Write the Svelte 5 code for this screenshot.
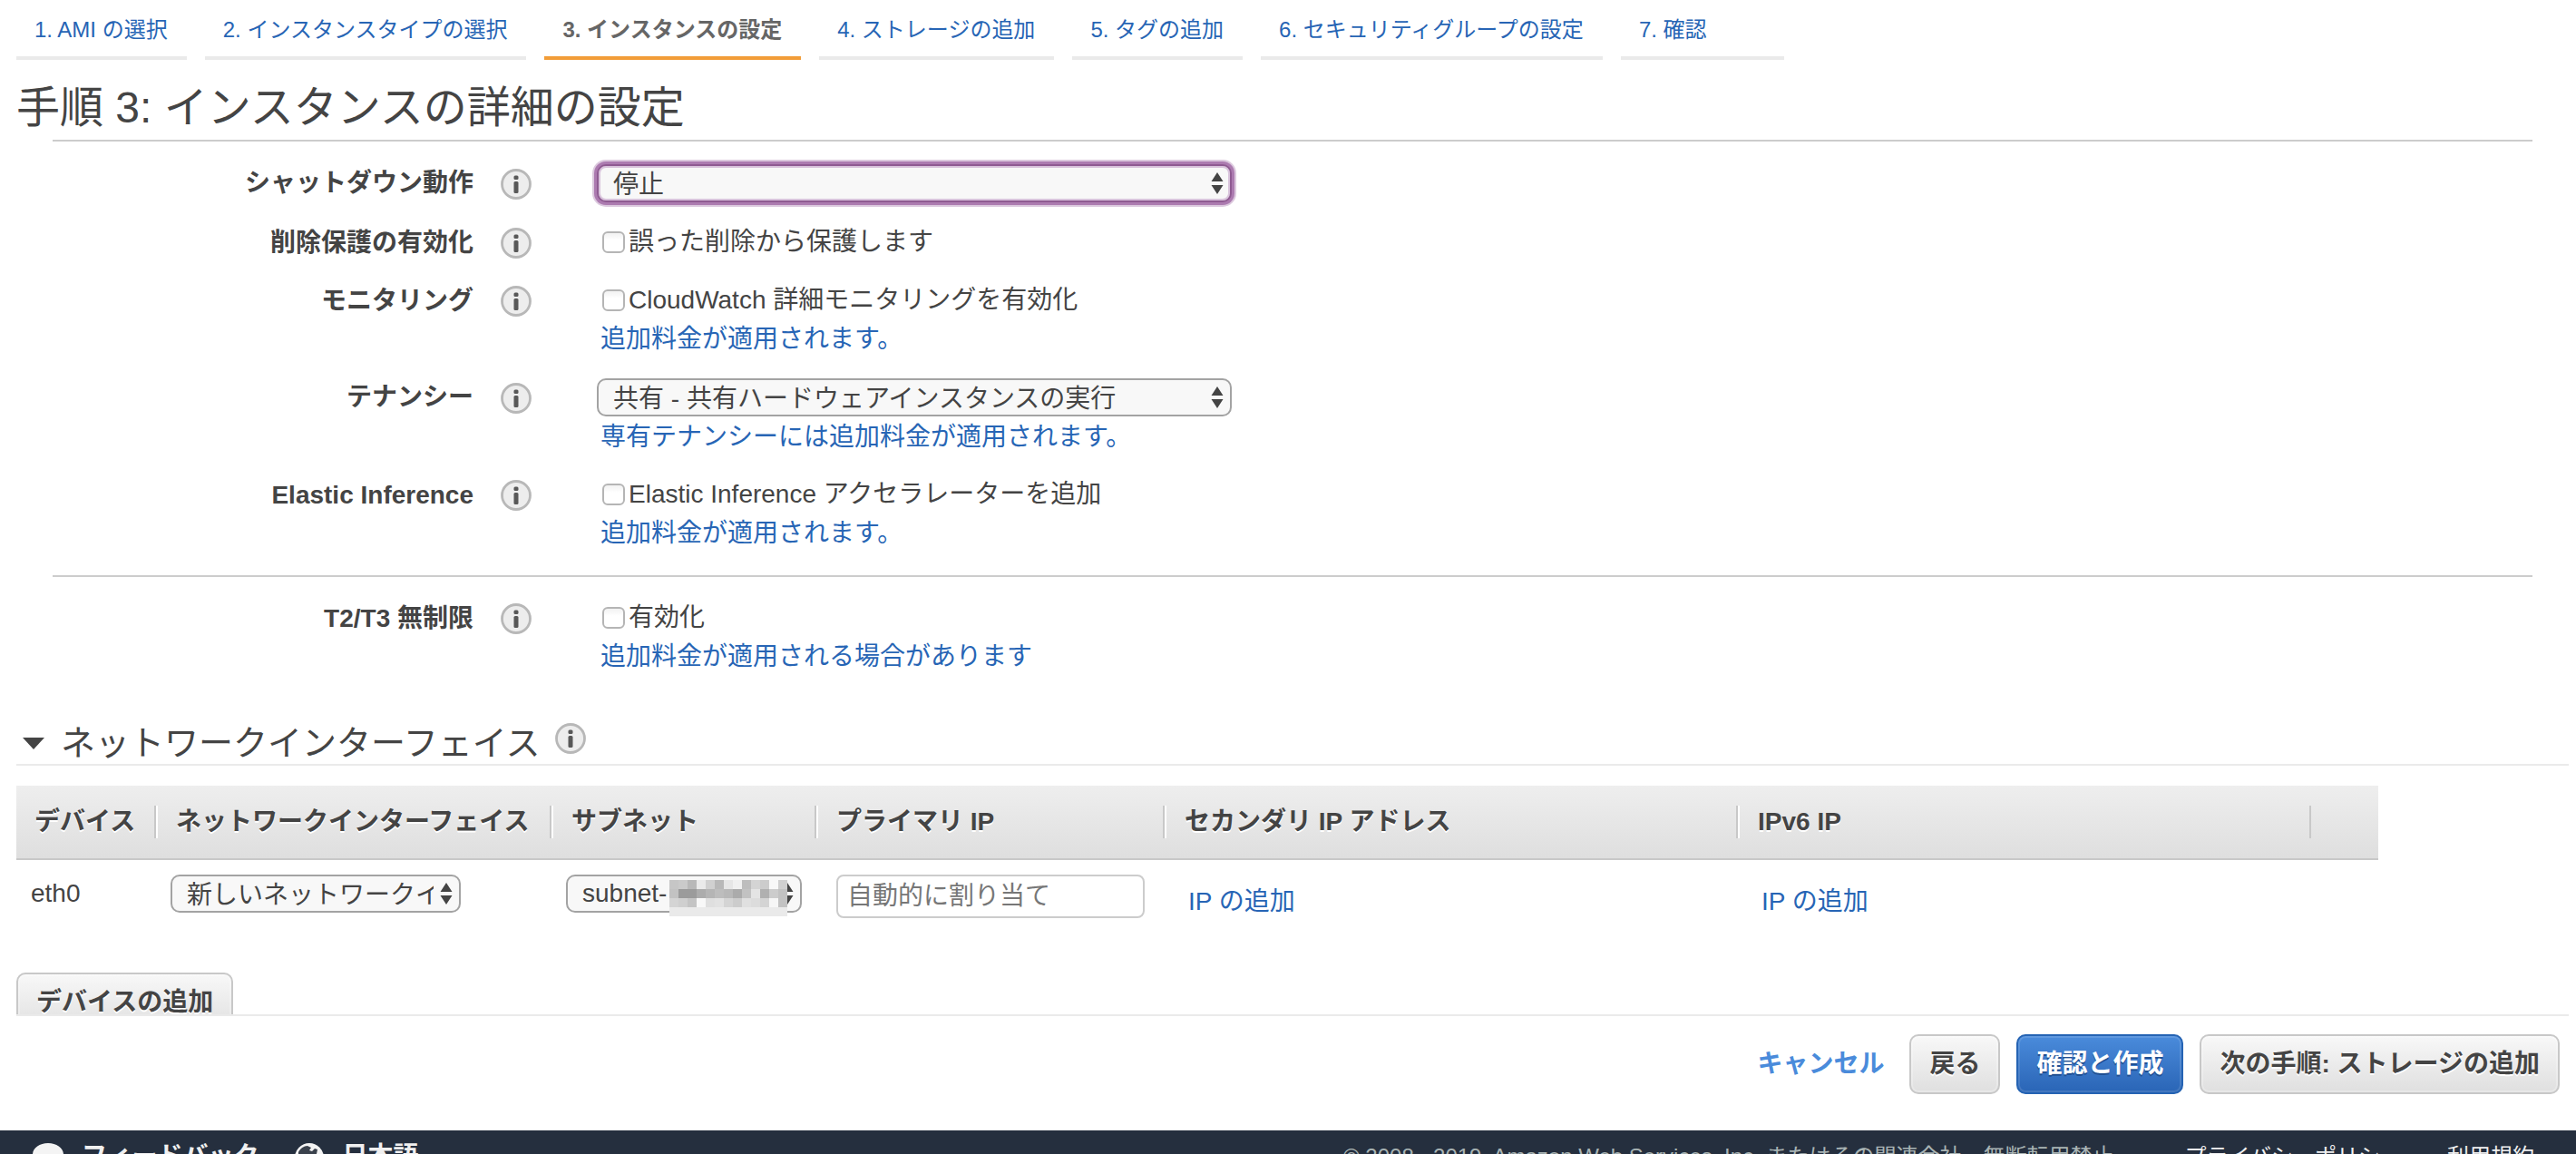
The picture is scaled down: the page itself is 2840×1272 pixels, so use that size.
<script>
  const steps = [
    '1. AMI の選択',
    '2. インスタンスタイプの選択',
    '3. インスタンスの設定',
    '4. ストレージの追加',
    '5. タグの追加',
    '6. セキュリティグループの設定',
    '7. 確認'
  ];
  const current = 2;

  const mainFields = [
    { id: 'shutdown', label: 'シャットダウン動作', select: '停止', focused: true },
    { id: 'protect', label: '削除保護の有効化', check: '誤った削除から保護します' },
    { id: 'monitor', label: 'モニタリング', check: 'CloudWatch 詳細モニタリングを有効化', hint: '追加料金が適用されます。' },
    { id: 'tenancy', label: 'テナンシー', select: '共有 - 共有ハードウェアインスタンスの実行', hint: '専有テナンシーには追加料金が適用されます。' },
    { id: 'elastic', label: 'Elastic Inference', check: 'Elastic Inference アクセラレーターを追加', hint: '追加料金が適用されます。' }
  ];
  const burstFields = [
    { id: 'unlimited', label: 'T2/T3 無制限', check: '有効化', hint: '追加料金が適用される場合があります' }
  ];

  const columns = ['デバイス', 'ネットワークインターフェイス', 'サブネット', 'プライマリ IP', 'セカンダリ IP アドレス', 'IPv6 IP'];

  // Grey levels of the mask over the subnet id, one row per line
  const mask = [
    'c6 ca b8 ea d0 b8 e6 f0 bd d4 cc f8 cf',
    'c2 9b 9b ac b5 bd b8 ab c2 e4 b0 cc c2',
    'd4 cf c4 f8 df e2 d4 cc e0 dc d4 f6 c2',
    'ea ea ea ea ea ea ea ea ea ea ea ea ea'
  ].map((line) => line.split(' '));
</script>

{#snippet info(name)}
  <button class="info" type="button" aria-label={`${name} の情報`}>
    <svg viewBox="0 0 34 34" width="34" height="34" aria-hidden="true">
      <circle cx="17" cy="17" r="15.500" fill="#ededed" stroke="#b8b8b8" stroke-width="2.800" />
      <rect x="14.500" y="7.500" width="5" height="4.500" rx="1.500" fill="#585858" />
      <rect x="14.500" y="14" width="5" height="13" rx="1.500" fill="#585858" />
    </svg>
  </button>
{/snippet}

{#snippet arrows()}
  <svg class="arrows" viewBox="0 0 14 24" width="14" height="24" aria-hidden="true">
    <path d="M7 0 13.5 10H.5zM7 24 .5 14h13z" fill="#444" />
  </svg>
{/snippet}

{#snippet field(f)}
  <div class="field">
    <label class="name" class:tall={f.select} for={f.id}>{f.label}</label>
    <div class="tip" class:tall={f.select}>{@render info(f.label)}</div>
    <div class="control">
      {#if f.select}
        <div class="line tall">
          <span class="picker wide">
            <select id={f.id} class:focused={f.focused}><option>{f.select}</option></select>
            {@render arrows()}
          </span>
        </div>
      {:else}
        <div class="line">
          <input id={f.id} type="checkbox" />
          <label for={f.id}>{f.check}</label>
        </div>
      {/if}
      {#if f.hint}<a class="hint" href="#pricing">{f.hint}</a>{/if}
    </div>
  </div>
{/snippet}

<div class="shell">
  <main>
    <nav class="steps">
      {#each steps as step, i}
        <a href={`#step-${i + 1}`} class:active={i === current} aria-current={i === current ? 'step' : undefined}>{step}</a>
      {/each}
    </nav>
    <h1>手順 3: インスタンスの詳細の設定</h1>

    <form class="group">
      {#each mainFields as f}{@render field(f)}{/each}
    </form>
    <form class="group second">
      {#each burstFields as f}{@render field(f)}{/each}
    </form>

    <section>
      <header>
        <h2>
          <button class="toggle" type="button" aria-expanded="true">
            <svg viewBox="0 0 24 13" width="24" height="13" aria-hidden="true"><path d="M0 0h24L12 13z" fill="#444" /></svg>
            ネットワークインターフェイス
          </button>
        </h2>
        {@render info('ネットワークインターフェイス')}
      </header>
      <table>
        <colgroup>
          <col class="c-device" /><col class="c-nic" /><col class="c-subnet" /><col class="c-ip" />
          <col class="c-long" /><col class="c-long" /><col class="c-end" />
        </colgroup>
        <thead>
          <tr>
            {#each columns as c}<th scope="col"><div>{c}</div></th>{/each}
            <td class="end"></td>
          </tr>
        </thead>
        <tbody>
          <tr>
            <td class="device">eth0</td>
            <td class="pick">
              <span class="picker nic">
                <select aria-label="ネットワークインターフェイス"><option>新しいネットワークインターフェイス</option></select>
                {@render arrows()}
              </span>
            </td>
            <td class="pick">
              <span class="picker subnet">
                <select class="latin" aria-label="サブネット"><option>subnet-</option></select>
                {@render arrows()}
                <svg class="mask" viewBox="0 0 130 40" width="130" height="40" shape-rendering="crispEdges" aria-hidden="true">
                  {#each mask as row, y}
                    {#each row as g, x}
                      <rect x={x * 10} y={y * 10} width="10" height="10" fill={`#${g}${g}${g}`} />
                    {/each}
                  {/each}
                </svg>
              </span>
            </td>
            <td class="ip"><input type="text" aria-label="プライマリ IP" placeholder="自動的に割り当て" /></td>
            <td class="add"><a href="#secondary-ip">IP の追加</a></td>
            <td class="add"><a href="#ipv6-ip">IP の追加</a></td>
            <td></td>
          </tr>
        </tbody>
      </table>
      <button class="btn" type="button">デバイスの追加</button>
    </section>
  </main>

  <div class="actions">
    <a href="#cancel">キャンセル</a>
    <button class="btn" type="button">戻る</button>
    <button class="btn primary" type="button">確認と作成</button>
    <button class="btn" type="button">次の手順: ストレージの追加</button>
  </div>

  <footer>
    <button type="button">
      <svg viewBox="0 0 34 30" width="34" height="30" aria-hidden="true">
        <path d="M17 0C7.600 0 0 5.600 0 12.500c0 4.200 2.800 7.900 7 10.200L5 30l9-5.200c1 .1 2 .2 3 .2 9.400 0 17-5.600 17-12.500S26.400 0 17 0z" fill="#f4f4f4" />
      </svg>
      フィードバック
    </button>
    <button type="button">
      <svg viewBox="0 0 32 32" width="32" height="32" aria-hidden="true">
        <circle cx="16" cy="16" r="16" fill="#f4f4f4" />
        <path d="M4 10C6 6 10 3 14 3l4 2-2 3 3 1 3-3 3 1-1 5-4 1-2 4-5 1-3-3-6 1z" fill="#3a414c" />
        <path d="M16 19l7 1 3 3-5 6-4-3z" fill="#3a414c" />
      </svg>
      日本語
    </button>
    <small>© 2008 - 2019, Amazon Web Services, Inc. またはその関連会社。無断転用禁止。</small>
    <a class="privacy" href="#privacy">プライバシーポリシー</a>
    <a href="#terms">利用規約</a>
  </footer>
</div>

<style>
  :global(body) {
    margin: 0;
    background: #fff;
  }
  .shell {
    display: flex;
    flex-direction: column;
    height: 100vh;
    overflow: hidden;
    color: #444;
    font: 28px/42px 'Liberation Sans', 'Noto Sans CJK JP', sans-serif;
  }
  .shell * {
    box-sizing: border-box;
  }
  button,
  input,
  select {
    margin: 0;
    font: inherit;
    color: inherit;
  }
  button {
    padding: 0;
    border: 0;
    background: none;
    cursor: pointer;
  }
  svg {
    display: block;
    flex: none;
  }
  a {
    color: #2765b5;
    text-decoration: none;
  }
  main {
    flex: 1 1 0;
    min-height: 0;
    overflow: hidden;
    padding: 0 8px 0 18px;
  }

  .steps {
    display: flex;
    gap: 20px;
    font-size: 24px;
  }
  .steps a {
    min-width: 180px;
    height: 66px;
    padding: 10px 21px 0 20px;
    border-bottom: 4px solid #eaeaea;
    line-height: 46px;
    white-space: nowrap;
  }
  .steps a.active {
    border-color: #f29d38;
    color: #666;
    font-weight: bold;
  }
  h1 {
    margin: 0;
    padding-top: 18px;
    font-size: 48px;
    font-weight: normal;
    line-height: 70px;
  }

  .group {
    display: flex;
    flex-direction: column;
    gap: 22px;
    margin: 0 40px;
    padding: 24px 0 26px;
    border-top: 2px solid #ccc;
  }
  .group.second {
    padding-bottom: 0;
  }
  .field {
    display: grid;
    grid-template-columns: 464px 136px 1fr;
  }
  .name {
    height: 42px;
    font-weight: bold;
    line-height: 44px;
    text-align: right;
  }
  .tip {
    display: flex;
    align-items: center;
    height: 42px;
    padding: 2px 0 0 30px;
  }
  .info {
    width: 34px;
    height: 34px;
    border-radius: 50%;
  }
  .line {
    display: flex;
    align-items: center;
    gap: 4px;
    height: 42px;
    padding-left: 6px;
  }
  .tall {
    height: 44px;
  }
  .line.tall {
    padding-left: 0;
  }
  .hint {
    display: block;
    padding-left: 4px;
    line-height: 44px;
    height: 42px;
  }
  input[type='checkbox'] {
    appearance: none;
    width: 25px;
    height: 24px;
    border: 2px solid #b5b5b5;
    border-radius: 6px;
    background: linear-gradient(#f2f2f2, #fff 40%);
  }

  .picker {
    position: relative;
    display: block;
  }
  .wide {
    width: 700px;
  }
  .nic {
    width: 320px;
  }
  .subnet {
    width: 260px;
  }
  select {
    appearance: none;
    display: block;
    width: 100%;
    height: 42px;
    padding: 4px 28px 0 16px;
    border: 2px solid #a3a3a3;
    border-radius: 10px;
    background: #f8f8f8;
    line-height: 34px;
    outline: none;
  }
  select.latin {
    padding-top: 0;
  }
  select.focused {
    border-color: #8f5b92;
    box-shadow: 0 0 0 3px #ac7bb0, 0 0 0 5px #dcc9de, inset 0 0 0 2px #d9c4dc;
  }
  .arrows {
    position: absolute;
    top: 9px;
    right: 9px;
    pointer-events: none;
  }
  .mask {
    position: absolute;
    top: 6px;
    left: 114px;
  }

  section header {
    display: flex;
    gap: 16px;
    margin-top: 53px;
    border-bottom: 2px solid #eaeaea;
  }
  h2 {
    margin: 0;
    font-size: 38px;
    font-weight: normal;
  }
  .toggle {
    display: flex;
    align-items: center;
    gap: 18px;
    padding-left: 7px;
    line-height: 45px;
  }
  table {
    table-layout: fixed;
    width: 2604px;
    margin: 22px 0 52px;
    border-collapse: separate;
    border-spacing: 0;
  }
  .c-device {
    width: 156px;
  }
  .c-nic {
    width: 436px;
  }
  .c-subnet {
    width: 292px;
  }
  .c-ip {
    width: 384px;
  }
  .c-long {
    width: 632px;
  }
  .c-end {
    width: 72px;
  }
  thead tr {
    background: linear-gradient(#eee, #dedede);
  }
  th,
  .end {
    padding: 22px 4px 22px 0;
    border-bottom: 2px solid #c8c8c8;
    text-align: left;
  }
  th div {
    height: 36px;
    padding-left: 20px;
    border-right: 2px solid #c8c8c8;
    margin-right: -2px;
    box-shadow: 2px 0 #fff;
    line-height: 36px;
    text-shadow: 0 2px #fff;
    white-space: nowrap;
  }
  th:nth-child(6) div {
    box-shadow: none;
  }
  tbody tr {
    height: 72px;
  }
  tbody td {
    padding: 16px 0 0;
    vertical-align: top;
  }
  tbody .device {
    padding-left: 16px;
  }
  tbody .pick {
    padding-left: 14px;
  }
  tbody .ip {
    padding-left: 20px;
  }
  tbody .add {
    padding: 20px 0 0 24px;
    line-height: 52px;
  }
  tbody .add a {
    display: block;
  }
  input[type='text'] {
    display: block;
    width: 340px;
    height: 48px;
    padding: 0 10px;
    border: 2px solid #ccc;
    border-radius: 8px;
    background: #fff;
  }
  input::placeholder {
    color: #777;
    opacity: 1;
  }

  .btn {
    height: 66px;
    padding: 0 20px;
    border: 2px solid #c8c8c8;
    border-radius: 10px;
    background: linear-gradient(#f8f8f8, #dfdfdf);
    box-shadow: inset 0 0 0 2px rgb(255 255 255 / 0.25);
    font-weight: bold;
    text-shadow: 0 2px #fff;
    white-space: nowrap;
  }
  .primary {
    border-color: #2563b3;
    background: linear-gradient(#4a8bdb, #2a65b6);
    box-shadow: inset 0 0 0 2px rgb(255 255 255 / 0.12);
    color: #fff;
    text-shadow: 0 2px #1f4f92;
  }
  .actions {
    display: flex;
    flex: none;
    align-items: flex-start;
    justify-content: flex-end;
    gap: 18px;
    height: 128px;
    margin: 0 8px 0 18px;
    padding: 20px 10px 0 0;
    border-top: 2px solid #eaeaea;
  }
  .actions a {
    padding-right: 10px;
    color: #4a8bdb;
    font-weight: bold;
    line-height: 66px;
  }
  footer {
    display: flex;
    flex: 0 0 26px;
    align-items: flex-start;
    gap: 40px;
    height: 26px;
    overflow: hidden;
    padding: 14px 46px 0 36px;
    background: #252f3e;
    color: #f0f0f0;
    font-size: 24px;
    line-height: 30px;
    white-space: nowrap;
  }
  footer button {
    display: flex;
    align-items: flex-start;
    gap: 20px;
    font-size: 28px;
    font-weight: bold;
  }
  footer small {
    margin-left: auto;
    color: #a9b4b4;
    font-size: 24px;
  }
  footer a {
    color: #f0f0f0;
  }
  footer .privacy {
    margin: 0 10px 0 14px;
  }
</style>
